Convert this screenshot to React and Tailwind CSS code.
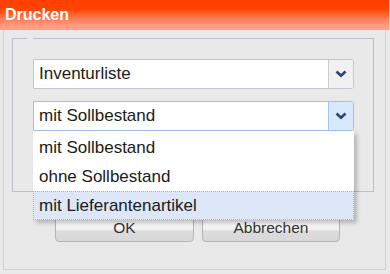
import React from 'react'

function Chevron() {
  return (
    <svg width="12" height="8" viewBox="0 0 12 8" className="block">
      <path d="M1.5 1.5 L6 5.8 L10.5 1.5" fill="none" stroke="#24457e" strokeWidth="2.6" strokeLinejoin="miter" />
    </svg>
  )
}

function Combo({ value, active }) {
  return (
    <div
      className={
        active
          ? 'flex h-[30px] w-[321px] rounded-r-[3px] border border-[#9fc1e7] bg-white'
          : 'flex h-[30px] w-[321px] rounded-r-[3px] border border-[#c4c7d1] bg-white'
      }
    >
      <div className="flex flex-1 items-center pl-[5px] text-[17px] text-[#1b1b1b]">{value}</div>
      <div
        className={
          active
            ? 'flex w-[25px] items-center justify-center rounded-r-[2px] border-l border-[#a5c5e8] bg-[#d9e9fb]'
            : 'flex w-[25px] items-center justify-center rounded-r-[2px] border-l border-[#cbcdd4] bg-[#f1f1f1]'
        }
      >
        <Chevron />
      </div>
    </div>
  )
}

function Button({ label, width }) {
  return (
    <div
      className="flex h-[28px] items-center justify-center rounded-[4px] border border-[#b3b3b3] bg-[linear-gradient(to_bottom,#fafafa_0%,#f2f2f2_55%,#dcdcdc_62%,#d8d8d8_100%)] text-[15.5px] text-[#333]"
      style={{ width }}
    >
      {label}
    </div>
  )
}

export default function App() {
  return (
    <div className="relative h-[274px] w-[390px] overflow-hidden bg-[#e9e9e9] font-['Liberation_Sans',Arial,sans-serif]">
      <div className="flex h-[30px] items-center border-r border-[#d8d8d8] bg-[linear-gradient(to_bottom,#ff3f00_0%,#ff4400_30%,#ff7a52_62%,#ff9c80_85%,#ffa08a_100%)] pl-[5px]">
        <span className="text-[16px] font-bold text-white">Drucken</span>
      </div>

      <div className="ml-[3px] h-[240px] w-[383px] border-x border-b border-[#d2d2d2] pl-[8px] pt-[8px]">
        <div className="relative h-[154px] w-[362px] border border-[#b9bdcc] pl-[20px] pt-[20px]">
          <span className="absolute -top-px left-[14px] h-px w-[6px] bg-[#e9e9e9]" />
          <div className="flex flex-col gap-[12px]">
            <Combo value="Inventurliste" />
            <Combo value="mit Sollbestand" active />
          </div>
        </div>

        <div className="mt-[22px] flex gap-[8px] pl-[43px]">
          <Button label="OK" width={139} />
          <Button label="Abbrechen" width={138} />
        </div>
      </div>

      <div className="absolute left-[33px] top-[131px] w-[321px] bg-white pt-[2px] text-[17px] text-[#1b1b1b] shadow-[3px_3px_4px_rgba(0,0,0,0.22)]">
        <div className="flex h-[29px] items-center pl-[6px]">mit Sollbestand</div>
        <div className="flex h-[29px] items-center pl-[6px]">ohne Sollbestand</div>
        <div className="flex h-[29px] items-center border border-dotted border-[#9db6e4] bg-[#dde7f7] pl-[5px]">mit Lieferantenartikel</div>
      </div>
    </div>
  )
}
